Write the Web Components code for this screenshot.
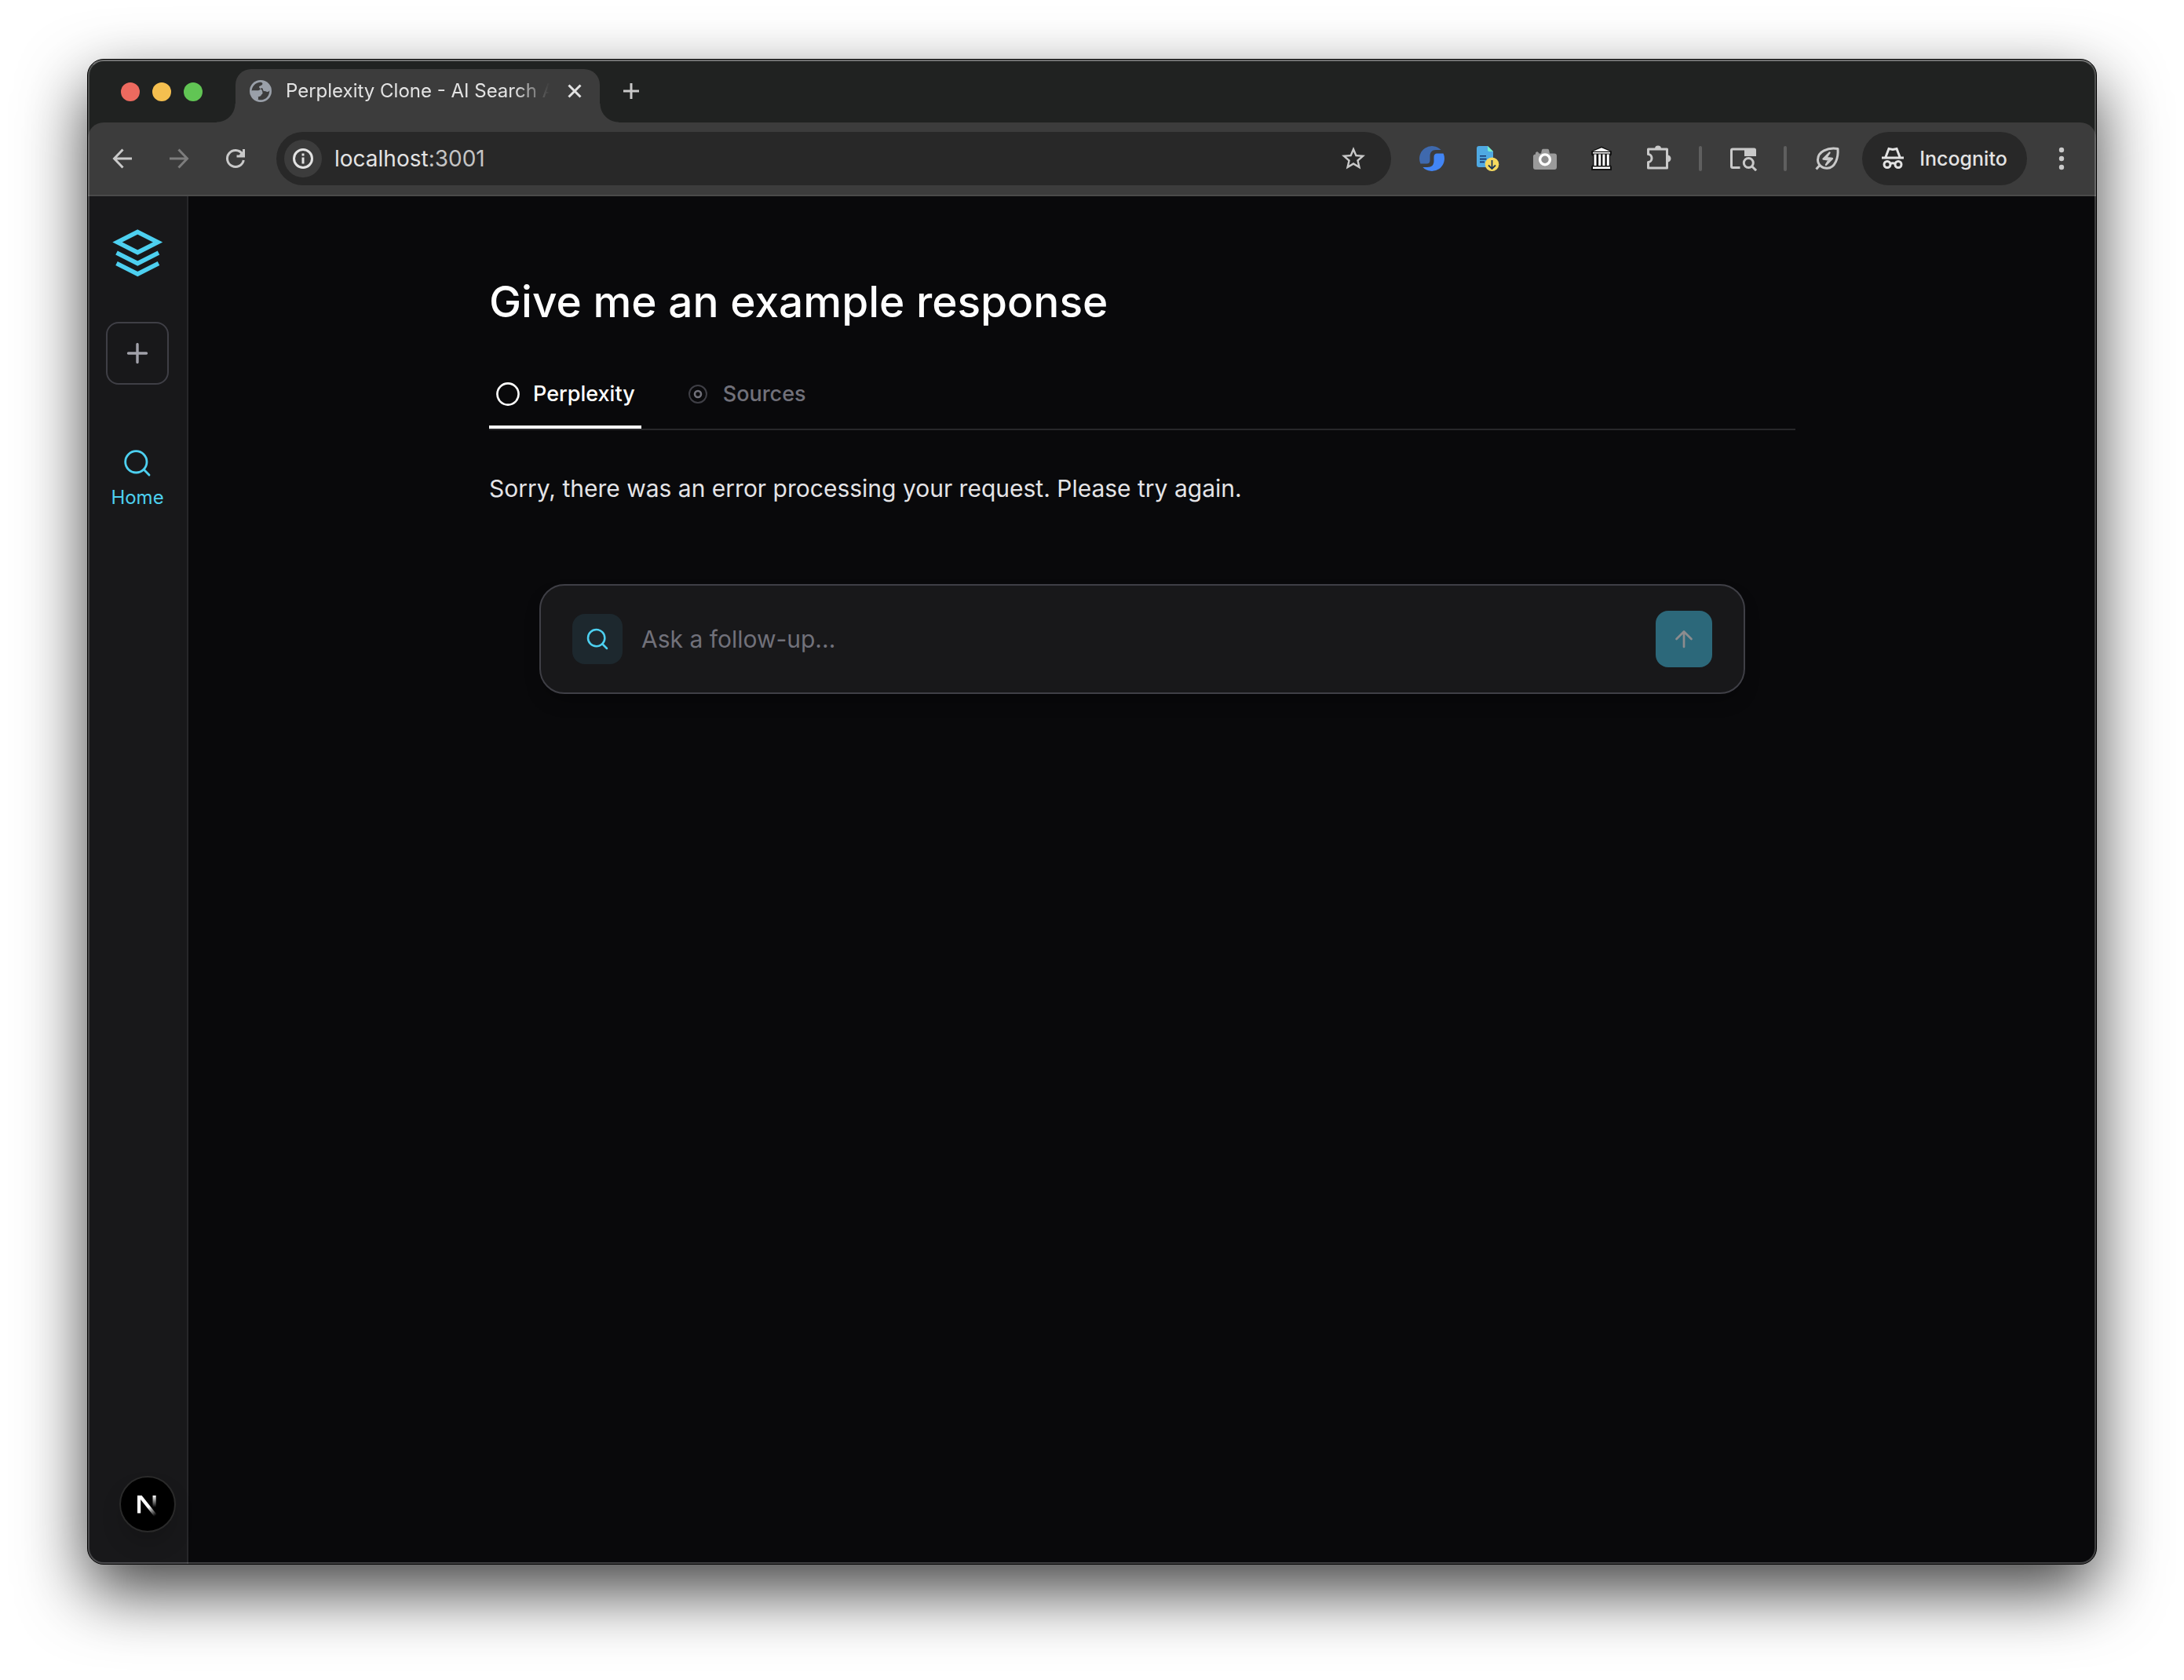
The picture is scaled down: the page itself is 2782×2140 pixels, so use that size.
<!DOCTYPE html>
<html lang="en">
<head>
<meta charset="utf-8">
<title>Perplexity Clone - AI Search App</title>
<style>
  html { height: 100%; background: #fff; }
  body {
    margin: 0; min-height: 100vh; box-sizing: border-box; padding: 75px 111px 147px;
    display: flex; overflow: hidden; font-family: Inter, "Noto Sans", sans-serif;
    -webkit-font-smoothing: antialiased;
  }
</style>
</head>
<body>
<browser-window>
  <tab-strip slot="tabs">
    <browser-tab>Perplexity Clone - AI Search App</browser-tab>
  </tab-strip>
  <tool-bar slot="toolbar"></tool-bar>
  <app-shell>
    <side-nav slot="nav"></side-nav>
    <answer-view>
      <span slot="question">Give me an example response</span>
      <span slot="answer">Sorry, there was an error processing your request. Please try again.</span>
      <follow-up-box slot="composer"></follow-up-box>
    </answer-view>
  </app-shell>
</browser-window>

<script>
const base = `<style>
  :host, *, *::before, *::after { box-sizing: border-box; }
  button, input { font: inherit; color: inherit; background: none; border: 0; padding: 0; margin: 0; }
  svg { display: block; flex: none; }
  button { display: flex; align-items: center; justify-content: center; }
</style>`;

function component(name, html) {
  const template = document.createElement('template');
  template.innerHTML = base + html;
  customElements.define(name, class extends HTMLElement {
    constructor() {
      super();
      this.attachShadow({ mode: 'open' }).append(template.content.cloneNode(true));
    }
  });
}

component('browser-window', `<style>
  :host { flex: 1; display: flex; flex-direction: column; position: relative; min-width: 0;
    border: 1px solid #000; border-radius: 21px; background: #202221;
    box-shadow: 0 34px 84px rgba(0,0,0,.74); }
  .clip { flex: 1; display: flex; flex-direction: column; border-radius: 20px; overflow: hidden; }
  .edge { position: absolute; inset: 0; border: 2px solid rgba(255,255,255,.22); border-radius: 20px; pointer-events: none; }
  .edge { border-top-color: rgba(255,255,255,.36); }
</style>
<div class="clip"><slot name="tabs"></slot><slot name="toolbar"></slot><slot></slot></div>
<div class="edge"></div>`);

component('tab-strip', `<style>
  :host { display: flex; height: 80px; padding: 12px 42px 0; background: #202221; }
  .lights { display: flex; gap: 16px; align-items: center; margin-right: 42px; padding-bottom: 10px; }
  .lights button { width: 24px; height: 24px; border-radius: 50%; }
  .new { width: 56px; height: 56px; margin-left: 12px; color: #c9c9c9; }
</style>
<div class="lights">
  <button aria-label="Close" style="background:#ed6a5f"></button>
  <button aria-label="Minimise" style="background:#f5bf4f"></button>
  <button aria-label="Zoom" style="background:#61c554"></button>
</div>
<slot></slot>
<button class="new" aria-label="New tab"><svg width="24" height="24" stroke="currentColor" stroke-width="3"><path d="M12 2v20M2 12h20"/></svg></button>`);

component('browser-tab', `<style>
  :host { position: relative; display: flex; align-items: center; width: 464px; height: 68px;
    padding: 0 12px 12px 18px; background: #3c3c3c; border-radius: 20px 20px 0 0; }
  :host::before, :host::after { content: ""; position: absolute; bottom: 0; width: 24px; height: 24px; }
  :host::before { right: 100%; background: radial-gradient(circle at 0 0, transparent 23px, #3c3c3c 24px); }
  :host::after { left: 100%; background: radial-gradient(circle at 100% 0, transparent 23px, #3c3c3c 24px); }
  .title { flex: 1; margin-left: 18px; min-width: 0; overflow: hidden; white-space: nowrap; font-size: 24px; line-height: 32px;
    color: #e3e3e3; -webkit-mask: linear-gradient(to left, transparent, #000 44px); mask: linear-gradient(to left, transparent, #000 44px); }
  button { width: 40px; height: 40px; margin-left: 12px; color: #e3e3e3; }
</style>
<svg width="28" height="28" viewBox="0 0 28 28"><circle cx="14" cy="14" r="14" fill="#9aa0a9"/>
<path fill="#3c3c3c" d="M2.6 13.4C3 8 7 3.6 13 2.7C16.500 2.600 17 4.500 15.800 6C14.800 7.400 12.500 7 12 8.600C11.800 10 13.800 10.400 13.300 11.600C15.500 11.500 16 13.500 16.400 15.500C17 17.500 15.500 18.300 15 18.600C14.600 19.400 14.600 20.300 13 20.700L10.500 21.500C11.500 22.500 11 24 10.600 24.800C12.500 25.500 15 25.500 17 25C22 23.500 25.300 19 25.300 13.200C24 15.800 21 15 19.800 14C18 14.500 17 13.500 17 12C17 10.500 15.500 10 14.500 10.500L12.500 12.800C10 13.800 6 12.800 2.600 13.400Z"/>
<path fill="#9aa0a9" d="M2 14.200C5 13.600 9 13.800 12 14.600C14 15.500 14 18 12.500 18.600C12 19.500 12 20 10.500 20.300L9.500 24L4 21Z"/></svg>
<span class="title"><slot></slot></span>
<button aria-label="Close tab"><svg width="20" height="20" stroke="currentColor" stroke-width="3"><path d="M2.500 2.500l15 15M17.500 2.500l-15 15"/></svg></button>`);

component('tool-bar', `<style>
  :host { display: flex; align-items: center; padding: 12px 8px; background: #3c3c3c; color: #c9c9c9;
    border-bottom: 2px solid #4a4a4a; border-radius: 20px 20px 0 0; }
  .tool { width: 72px; height: 68px; flex: none; }
  .off { color: #7d7d7d; }
  .omni { flex: 1; display: flex; align-items: center; height: 68px; margin: 0 16px; padding: 0 12px 0 10px; min-width: 0;
    border-radius: 34px; background: #282828; }
  .info { width: 48px; height: 48px; border-radius: 50%; background: #3c3c3c; color: #e3e3e3; }
  .url { flex: 1; margin-left: 16px; font-size: 28px; line-height: 36px; color: #c4c4c4; white-space: nowrap; }
  .url b { font-weight: 400; color: #e3e3e3; }
  .sep { width: 4px; height: 32px; margin: 0 16px; border-radius: 2px; background: #5f5f5f; flex: none; }
  .incognito { width: 210px; height: 68px; margin: 0 8px; gap: 20px; border-radius: 34px; background: #282828; color: #e3e3e3;
    font-size: 25px; line-height: 36px; font-weight: 500; flex: none; }
</style>
<button class="tool" aria-label="Back"><svg width="36" height="36" fill="none" stroke="currentColor" stroke-width="3"><path d="M30 18H8M18.500 6.500L7.500 18l11 11.500"/></svg></button>
<button class="tool off" aria-label="Forward"><svg width="36" height="36" fill="none" stroke="currentColor" stroke-width="3"><path d="M6 18h22M17.500 6.500L28.500 18l-11 11.500"/></svg></button>
<button class="tool" aria-label="Reload"><svg width="36" height="36" fill="none" stroke="currentColor" stroke-width="3"><path d="M28.300 20A10.500 10.500 0 1 1 26.500 11.800"/><path d="M28.500 6v9H19.500M28 10l-4 4"/></svg></button>
<div class="omni">
  <button class="info" aria-label="Site information"><svg width="28" height="28" fill="none" stroke="currentColor" stroke-width="3"><circle cx="14" cy="14" r="11.500"/><path d="M14 12.500v8M14 7.500v3"/></svg></button>
  <span class="url"><b>localhost</b>:3001</span>
  <button class="tool" aria-label="Bookmark this page"><svg width="36" height="36" viewBox="0 0 24 24" fill="currentColor"><path d="M22 9.240l-7.190-.62L12 2 9.190 8.630 2 9.240l5.460 4.730L5.820 21 12 17.270 18.180 21l-1.630-7.030L22 9.240zM12 15.400l-3.760 2.270 1-4.280-3.320-2.880 4.380-.38L12 6.100l1.710 4.040 4.380.38-3.320 2.880 1 4.280L12 15.400z"/></svg></button>
</div>
<button class="tool" aria-label="Sync extension"><svg width="32" height="32"><path fill="#3f69ad" d="M1.400 22.500A16 16 0 0 1 27.600 5H21C16 5 13.500 8 13.500 13v5c0 3-1.500 4.500-4 4.500z"/><path fill="#4285f4" d="M30.600 9.500A16 16 0 0 1 4.400 27H10c6 0 8.500-3 8.500-8v-5c0-3 1.500-4.500 4-4.500z"/></svg></button>
<button class="tool" aria-label="Save document"><svg width="32" height="32"><path fill="#4fa9e2" d="M4 0h11l7 7v17a3 3 0 0 1-3 3H4a3 3 0 0 1-3-3V3a3 3 0 0 1 3-3z"/><path fill="#76efcb" d="M15 0l7 7h-5a2 2 0 0 1-2-2z"/><path stroke="#17346b" stroke-width="1.600" d="M5 12.800h8M5 16.600h8.500M5 20.400h6"/><circle cx="20.500" cy="23.200" r="8.800" fill="#f5d95f"/><path fill="none" stroke="#1d3557" stroke-width="1.800" d="M20.500 18v10.500M16 24.500l4.500 4.500 4.500-4.500"/></svg></button>
<button class="tool" aria-label="Screenshot"><svg width="32" height="32"><path fill="#9a9a9a" d="M4 10.500V8.500L6 7l2 1.500v1h3L12 5a2 2 0 0 1 2-1.300h5A2 2 0 0 1 21 5l1 4.500h6a3 3 0 0 1 3 3V27a3 3 0 0 1-3 3H4a3 3 0 0 1-3-3V12.500a3 3 0 0 1 3-2z"/><circle cx="16" cy="17.300" r="6.400" fill="#8d8d8d" stroke="#fff" stroke-width="3.400"/></svg></button>
<button class="tool" aria-label="Archive"><svg width="32" height="32"><path fill="#111" d="M3 6.500L16 .5l13 6V11l-2 2v11l2 2v5H3v-5l2-2V13l-2-2z"/><path fill="#fff" d="M5 6.800L16 2.300l11 4.500zM5 8h22v1.600H5zM6.500 10.500h3v14.500h-3zM12.200 10.500h3v14.500h-3zM17.400 10.500h3v14.500h-3zM22.800 10.500h3v14.500h-3zM5 26.500h22v2.500H5z"/></svg></button>
<button class="tool" aria-label="Extensions"><svg width="36" height="36" viewBox="0 0 36 36" fill="none" stroke="currentColor" stroke-width="3" stroke-linejoin="round"><path d="M5.500 6H29.500V30H5.500V22.500C8 22.500 10 20.300 10 17.500S8 12.500 5.500 12.500Z"/><path fill="currentColor" stroke="none" d="M14 5.500a4 4 0 0 1 8 0zM30 13.500a4.300 4.300 0 0 1 0 9z"/></svg></button>
<span class="sep"></span>
<button class="tool" aria-label="Search tabs"><svg width="36" height="32" fill="none" stroke="currentColor" stroke-width="3"><path d="M14.500 27.500H5a1.500 1.500 0 0 1-1.500-1.500V5.500A1.500 1.500 0 0 1 5 4H20"/><path fill="currentColor" stroke="none" d="M20 2.500h12.500a2.500 2.500 0 0 1 2.500 2.500v8H20z"/><circle cx="25.300" cy="21.500" r="6"/><path d="M29.500 25.700l5.500 5.500"/></svg></button>
<span class="sep"></span>
<button class="tool" aria-label="Energy saver"><svg width="32" height="32" fill="none" stroke="currentColor" stroke-width="3" stroke-linejoin="round"><path d="M29 3.500C16 1.500 3.500 7 3.500 17.500 3.500 24 9 28.500 15.500 28.300 25.500 28 30 15 29 3.500ZM1.500 29.500L6.500 24"/><path stroke-width="2.400" d="M18.500 8.500L10.500 16.500l7.500 1-4 6.500 8-8-8-1z"/></svg></button>
<button class="incognito"><svg width="28" height="32" fill="none" stroke="currentColor" stroke-width="3"><path d="M0 15h28M5 14L9 3.500 14 4.500 19 3.500l4 10.500"/><circle cx="7" cy="23.500" r="4"/><circle cx="21" cy="23.500" r="4"/><path d="M11 22.500q3-1.500 6 0"/></svg>Incognito</button>
<button class="tool" aria-label="Menu"><svg width="8" height="32" fill="currentColor"><circle cx="4" cy="5" r="3.200"/><circle cx="4" cy="16" r="3.200"/><circle cx="4" cy="27" r="3.200"/></svg></button>`);

component('app-shell', `<style>
  :host { flex: 1; display: flex; background: #09090b; }
  main { flex: 1; min-width: 0; }
</style>
<slot name="nav"></slot><main><slot></slot></main>`);

component('side-nav', `<style>
  :host { flex: none; display: flex; flex-direction: column; align-items: center; width: 128px; padding: 36px 0 40px;
    background: #18181a; border-right: 2px solid #27272a; color: #4dd0f0; }
  .plus { width: 80px; height: 80px; margin: 52px 0 80px; border: 2px solid #3f3f46; border-radius: 16px; color: #a1a1aa; }
  a { display: flex; flex-direction: column; align-items: center; gap: 8px; color: inherit; text-decoration: none;
    font-size: 24px; line-height: 32px; }
  .next { width: 72px; height: 72px; margin: auto 0 0 26px; border-radius: 50%; background: #000; border: 2px solid #2a2a2a;
    box-shadow: 0 16px 32px -8px rgba(0,0,0,.24); }
</style>
<svg width="72" height="72" fill="none" stroke="currentColor" stroke-width="5.600"><path d="M36.300 9.500L62 22.500 36.300 35.500 10.500 22.500ZM9.500 36L36.300 49.500 63 36M9.500 49.500L36.300 63 63 49.500"/></svg>
<button class="plus" aria-label="New thread"><svg width="32" height="32" stroke="currentColor" stroke-width="3.400" stroke-linecap="round"><path d="M16 4.500v23M4.500 16h23"/></svg></button>
<a href="#home"><svg width="40" height="40" viewBox="0 0 24 24" fill="none" stroke="currentColor" stroke-width="1.700" stroke-linecap="round"><circle cx="11" cy="11" r="8.200"/><path d="M21 21l-4-4"/></svg>Home</a>
<button class="next" aria-label="Open Next.js dev tools"><svg width="28" height="32" fill="none">
  <defs>
    <linearGradient id="diag" gradientUnits="userSpaceOnUse" x1="17" y1="18" x2="26" y2="29"><stop stop-color="#fff"/><stop offset="1" stop-color="#fff" stop-opacity="0"/></linearGradient>
    <linearGradient id="bar" gradientUnits="userSpaceOnUse" x1="0" y1="5" x2="0" y2="20"><stop stop-color="#fff"/><stop offset="1" stop-color="#fff" stop-opacity="0"/></linearGradient>
  </defs>
  <path fill="#fff" d="M1 5h4.200v22.500H1z"/><path fill="url(#diag)" d="M1 5h5.600L26 29.500l-3.400 2.500L1 5z"/><path fill="url(#bar)" d="M20.500 5h4.200v16.500h-4.200z"/></svg></button>`);

component('answer-view', `<style>
  :host { display: block; max-width: 1664px; margin: 0 auto; padding-top: 96px; }
  h1 { margin: 0 0 44px; font-size: 55px; line-height: 76px; font-weight: 500; color: #fff; }
  .tabs { display: flex; gap: 48px; border-bottom: 2px solid #27272a; }
  .tabs button { gap: 16px; padding: 16px 8px 20px; border-bottom: 4px solid transparent; font-size: 27px; line-height: 40px; font-weight: 500; color: #71717a; }
  .tabs button.on { color: #fff; border-color: #fff; }
  p { margin: 48px 0 96px; font-size: 30px; line-height: 52px; color: #e4e4e7; }
</style>
<h1><slot name="question"></slot></h1>
<div class="tabs" role="tablist">
  <button class="on" role="tab" aria-selected="true"><svg width="32" height="32" fill="none" stroke="currentColor" stroke-width="2.600"><circle cx="16" cy="16" r="13.600"/></svg>Perplexity</button>
  <button role="tab" aria-selected="false"><svg width="32" height="32" fill="none"><circle cx="16" cy="16" r="11" stroke="#3f3f46" stroke-width="2"/><circle cx="16" cy="16" r="4" stroke="#71717a" stroke-width="2.600"/></svg>Sources</button>
</div>
<p><slot name="answer"></slot></p>
<slot name="composer"></slot>`);

component('follow-up-box', `<style>
  :host { display: block; margin: 0 64px; }
  form { display: flex; align-items: center; gap: 24px; padding: 32px 40px; border: 2px solid #3f3f46; border-radius: 32px;
    background: #18181a; box-shadow: 0 12px 24px -8px rgba(0,0,0,.4); }
  .mark { display: flex; align-items: center; justify-content: center; width: 64px; height: 64px; border-radius: 16px; background: #1d282e; color: #4dd0f0; }
  input { flex: 1; min-width: 0; height: 52px; font-size: 30px; color: #e4e4e7; outline: none; }
  input::placeholder { color: #71717a; opacity: 1; }
  .send { width: 72px; height: 72px; border-radius: 16px; background: #2c687a; color: #8c8c8e; }
</style>
<form>
  <label class="mark" for="q" aria-label="Follow-up question"><svg width="32" height="32" viewBox="0 0 24 24" fill="none" stroke="currentColor" stroke-width="1.900" stroke-linecap="round"><circle cx="11" cy="11" r="8"/><path d="M21 21l-4.300-4.300"/></svg></label>
  <input id="q" type="text" placeholder="Ask a follow-up...">
  <button class="send" type="button" aria-label="Send"><svg width="32" height="32" fill="none" stroke="currentColor" stroke-width="2.700" stroke-linecap="round" stroke-linejoin="round"><path d="M16 26V6.500M6.500 16L16 6.500 25.500 16"/></svg></button>
</form>`);
</script>
</body>
</html>
